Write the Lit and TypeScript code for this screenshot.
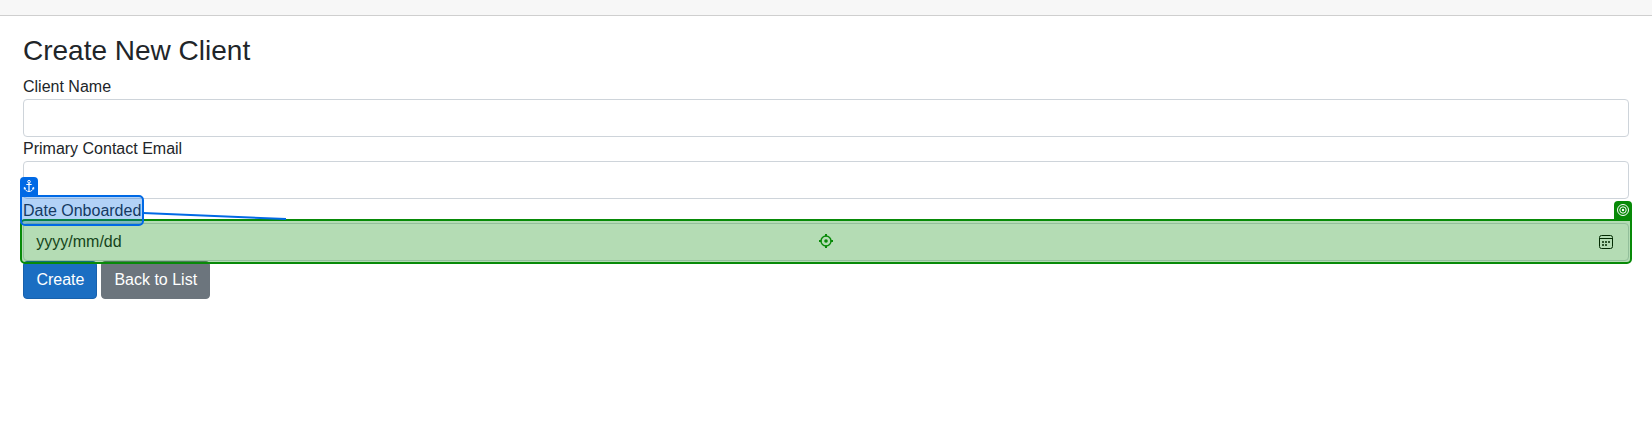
import { LitElement, html, css } from "lit";
import { customElement } from "lit/decorators.js";

@customElement("app-root")
export class AppRoot extends LitElement {
  static styles = css`
    :host { display: block; position: relative; height: 439px; overflow: hidden; background: #fff; color: #212529; font: 16px/24px "Liberation Sans", Arial, sans-serif; }
    * { box-sizing: border-box; }
    .bar { height: 16px; background: #f7f7f7; border-bottom: 1px solid #cfcfcf; }
    main { padding: 18px 23px 0; }
    h1 { margin: 0 0 7px; font-size: 28px; font-weight: 400; line-height: 34px; }
    .label { display: block; height: 24px; }
    .field { display: flex; align-items: center; justify-content: space-between; height: 38px; padding: 0 15px 0 12.3px; border: 1px solid #ced4da; border-radius: 4px; }
    .actions { display: flex; gap: 4px; }
    button { height: 38px; padding: 0 11.6px 0 12.4px; border: 1px solid #6c757d; border-radius: 4px; background: #6c757d; color: #fff; font: inherit; line-height: 24px; }
    .primary { background: #1b6ec2; border-color: #1861ac; }
    .anchor, .target { position: absolute; border: 2px solid #0069e5; border-radius: 5px; background: rgba(0, 105, 229, 0.3); }
    .anchor { left: 20px; top: 195px; width: 124px; height: 31px; border-top-left-radius: 0; }
    .target { left: 20px; top: 219px; width: 1612px; height: 45px; border-color: #088a08; border-top-right-radius: 0; background: rgba(8, 138, 8, 0.3); }
    .tag { position: absolute; width: 18px; height: 18px; background: #0069e5; border-radius: 4px 4px 0 0; }
    .tag svg { display: block; }
    .blue { left: 20px; top: 177px; }
    .green { left: 1614px; top: 201px; background: #088a08; }
    .line { position: absolute; left: 143px; top: 210px; }
    .sight { position: absolute; left: 819px; top: 234px; }
  `;

  render() {
    return html`
      <div class="bar"></div>
      <main>
        <h1>Create New Client</h1>
        <label class="label">Client Name</label>
        <div class="field"></div>
        <label class="label">Primary Contact Email</label>
        <div class="field"></div>
        <label class="label">Date Onboarded</label>
        <div class="field">
          <span>yyyy/mm/dd</span>
          <svg width="14" height="14" viewBox="0 0 14 14" fill="none" stroke="#000">
            <rect x=".5" y=".5" width="13" height="13" rx="2" />
            <path d="M.5 3.5h13" />
            <path d="M6 7h2M9 7h2M3 10h2M6 10h2M3 7h2" stroke-width="1.700" />
          </svg>
        </div>
        <div class="actions"><button class="primary">Create</button><button>Back to List</button></div>
      </main>
      <div class="target"></div>
      <div class="anchor"></div>
      <svg class="line" width="144" height="10"><path d="M0 3L143 9" stroke="#0069e5" stroke-width="2" /></svg>
      <div class="tag blue">
        <svg width="18" height="18" fill="none" stroke="#fff">
          <circle cx="9" cy="4.700" r="1.300" />
          <path d="M9 6v8.500M6.300 7.500h5.400" stroke-width="1.200" />
          <path d="M4.300 12.300v-2l1.700 1.300M13.700 12.300v-2l-1.700 1.300M4.600 11c.4 2 2.100 3.500 4.400 3.500s4-1.500 4.400-3.500" />
        </svg>
      </div>
      <div class="tag green">
        <svg width="18" height="18" fill="none" stroke="#fff">
          <circle cx="9" cy="9" r="5.500" /><circle cx="9" cy="9" r="3.200" /><circle cx="9" cy="9" r="1.200" fill="#fff" stroke="none" />
        </svg>
      </div>
      <svg class="sight" width="14" height="14" fill="none" stroke="#088a08">
        <circle cx="7" cy="7" r="5" stroke-width="1.400" />
        <path d="M7 0v2.500M7 11.500v2.500M0 7h2.500M11.500 7h2.500" stroke-width="2" />
        <circle cx="7" cy="7" r="1.800" fill="#088a08" stroke="none" />
      </svg>
    `;
  }
}
